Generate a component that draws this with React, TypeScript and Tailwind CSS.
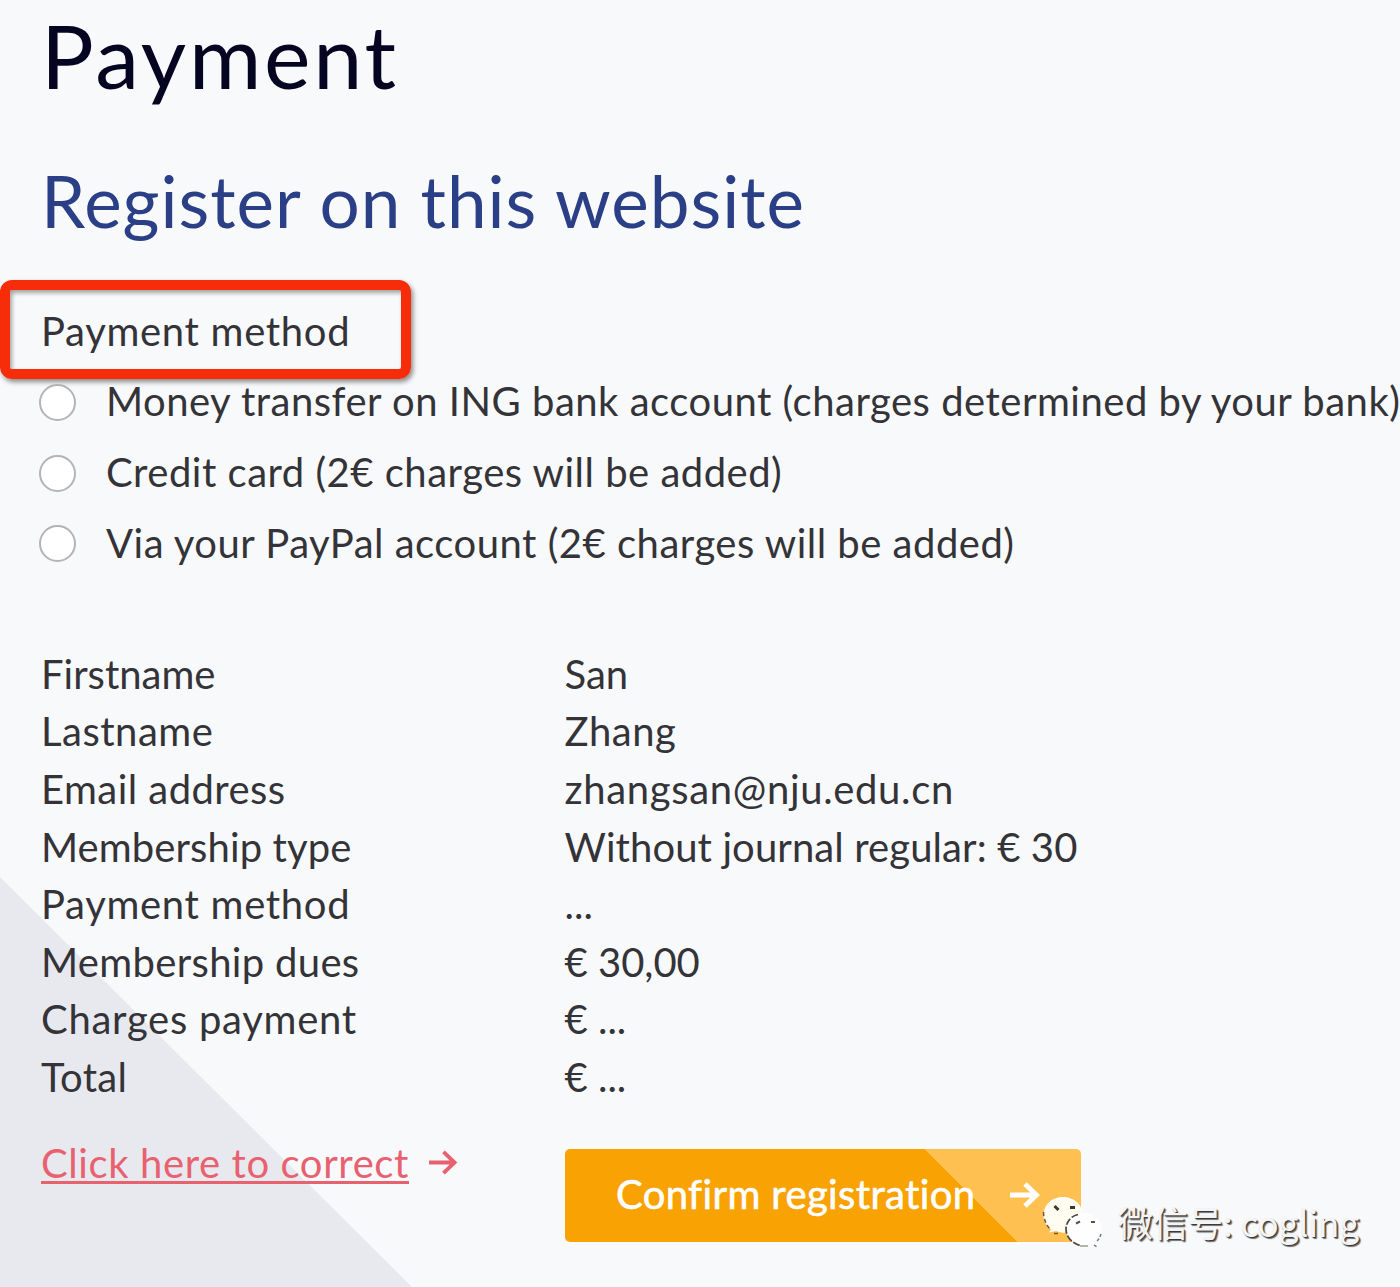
import React, { useState } from 'react';

type Option = { id: string; label: string };
type Row = { label: string; value: string; labelClass?: string; valueClass?: string };

const options: Option[] = [
    { id: 'transfer', label: 'Money transfer on ING bank account (charges determined by your bank)' },
    { id: 'card', label: 'Credit card (2€ charges will be added)' },
    { id: 'paypal', label: 'Via your PayPal account (2€ charges will be added)' },
];

const rows: Row[] = [
    { label: 'Firstname', value: 'San' },
    { label: 'Lastname', value: 'Zhang', labelClass: 'tracking-[0.5px]', valueClass: 'tracking-[0.5px]' },
    { label: 'Email address', value: 'zhangsan@nju.edu.cn', labelClass: 'tracking-[0.45px]', valueClass: 'tracking-[0.67px]' },
    { label: 'Membership type', value: 'Without journal regular: € 30', labelClass: 'tracking-[0.1px]', valueClass: 'tracking-[0.1px]' },
    { label: 'Payment method', value: '...', labelClass: 'tracking-[0.69px]' },
    { label: 'Membership dues', value: '€ 30,00', labelClass: 'tracking-[0.33px]' },
    { label: 'Charges payment', value: '€ ...', labelClass: 'tracking-[0.72px]' },
    { label: 'Total', value: '€ ...', labelClass: 'tracking-[0.3px]' },
];

const Arrow = ({ className, strokeWidth }: { className: string; strokeWidth: number }) => (
    <svg viewBox="0 0 30 28" className={className} fill="none" stroke="currentColor" strokeWidth={strokeWidth}>
        <path d="M0.5 14H27M15.5 3L27 14L15.5 25" />
    </svg>
);

// WeChat style account tag in the bottom right corner
const Watermark = () => (
    <div className="absolute left-[1042px] top-[1194px] flex items-center">
        <svg viewBox="0 0 62 56" className="h-[56px] w-[62px]">
            <path d="M21 3C9.500 3 1.500 11 1.500 21c0 6 3 11 7.500 14.500l-2 3 7-1.500c2 .6 5 1.800 7 1.800 11 0 20-8 20-17.800S32 3 21 3z" fill="#fffdf2" />
            <path d="M1.500 18c0 4 1 8 2.500 11M5 31c1 2 3 4 5 5M12 39.500h6" fill="none" stroke="#6b5a35" strokeWidth="1.500" strokeDasharray="4 3" />
            <path d="M42 19c-10 0-18 7-18 16s8 16 18 16c2 0 4-.3 6-.9l6 3.400-1.500-5.500C57 45 60 40 60 35c0-9-8-16-18-16z" fill="#fefefe" />
            <path d="M36 20.500C29 22 24 28 24 35c0 8 6 14 14 16.500" fill="none" stroke="#4b4639" strokeWidth="1.700" strokeDasharray="7 2" />
            <path d="M38 52h8" stroke="#7c9a7c" strokeWidth="1.300" />
            <path d="M52 51l3 2M59 40c-1 3-2 5-4 7" fill="none" stroke="#777" strokeWidth="1.500" strokeDasharray="3 2" />
            <path d="M12.500 12l4 4M28 13.500h5" stroke="#3c3829" strokeWidth="3" />
            <path d="M34 29.500l4-2M49 28h4" stroke="#55534c" strokeWidth="2" />
        </svg>
        <span className="ml-[14px] whitespace-nowrap font-['Noto_Sans_CJK_SC',sans-serif] text-[35px] leading-[56px] text-[#f4f4f4] [text-shadow:1px_1px_1px_#333,2px_2px_1px_#777]">
            微信号: cogling
        </span>
    </div>
);

export default function App(): React.JSX.Element {
    const [selected, setSelected] = useState('');

    return (
        <main className="relative h-[1287px] w-[1400px] overflow-hidden bg-[#f8f9fb] pt-[2px] pl-[41px] font-['Lato',sans-serif] text-[40px] text-[#333338]">
            <svg viewBox="0 0 412 410" className="absolute bottom-0 left-0 h-[410px] w-[412px]">
                <path d="M0 0L412 410H0z" fill="#e8e9ef" />
            </svg>

            <div className="relative">
                <h1 className="text-[88px] leading-[106px] tracking-[2.8px] text-[#050522]">Payment</h1>
                <h2 className="mt-[50px] text-[71px] leading-[86px] tracking-[0.98px] text-[#2a3f85]">Register on this website</h2>

                <div className="-ml-[41px] mt-[36px] h-[99px] w-[411px] rounded-[12px] border-[10px] border-[#f62d08] pl-[31px] leading-[82px] tracking-[0.69px] shadow-[2px_3px_5px_rgba(0,0,0,0.45),inset_2px_3px_4px_rgba(0,0,0,0.35)]">
                    Payment method
                </div>

                <div className="-mt-[12px]">
                    {options.map(({ id, label }) => (
                        <label key={id} className="flex h-[70.700px] cursor-pointer items-center whitespace-nowrap">
                            <input
                                type="radio"
                                name="method"
                                checked={selected === id}
                                onChange={() => setSelected(id)}
                                className="-ml-[2px] mr-[30px] size-[37px] shrink-0 appearance-none rounded-full border-[2px] border-[#b4b4b6] bg-white checked:border-[10px] checked:border-[#2a3f85]"
                            />
                            <span className="pb-[2px] tracking-[0.5px]">{label}</span>
                        </label>
                    ))}
                </div>

                <dl className="mt-[66px]">
                    {rows.map(({ label, value, labelClass, valueClass }) => (
                        <div key={label} className="flex h-[57.600px] items-center whitespace-nowrap">
                            <dt className="w-[523.500px]"><span className={labelClass}>{label}</span></dt>
                            <dd><span className={valueClass}>{value}</span></dd>
                        </div>
                    ))}
                </dl>

                <div className="mt-[43px] flex items-start">
                    <div className="-mt-[16px] flex w-[524px] items-center text-[#e8616f]">
                        <a href="#" className="tracking-[0.6px] underline decoration-[3px] underline-offset-[3px]">Click here to correct</a>
                        <Arrow className="ml-[19px] h-[27px] w-[30px]" strokeWidth={4} />
                    </div>
                    <button className="flex h-[93px] w-[516px] items-center rounded-[5px] bg-[linear-gradient(45deg,#f9a203_0_320px,#fec050_320px)] pl-[51px] text-white">
                        <span className="pb-[2px] tracking-[0.37px] [-webkit-text-stroke:0.6px_white]">Confirm registration</span>
                        <Arrow className="ml-[34px] h-[28px] w-[31px]" strokeWidth={5} />
                    </button>
                </div>
            </div>

            <Watermark />
        </main>
    );
}
